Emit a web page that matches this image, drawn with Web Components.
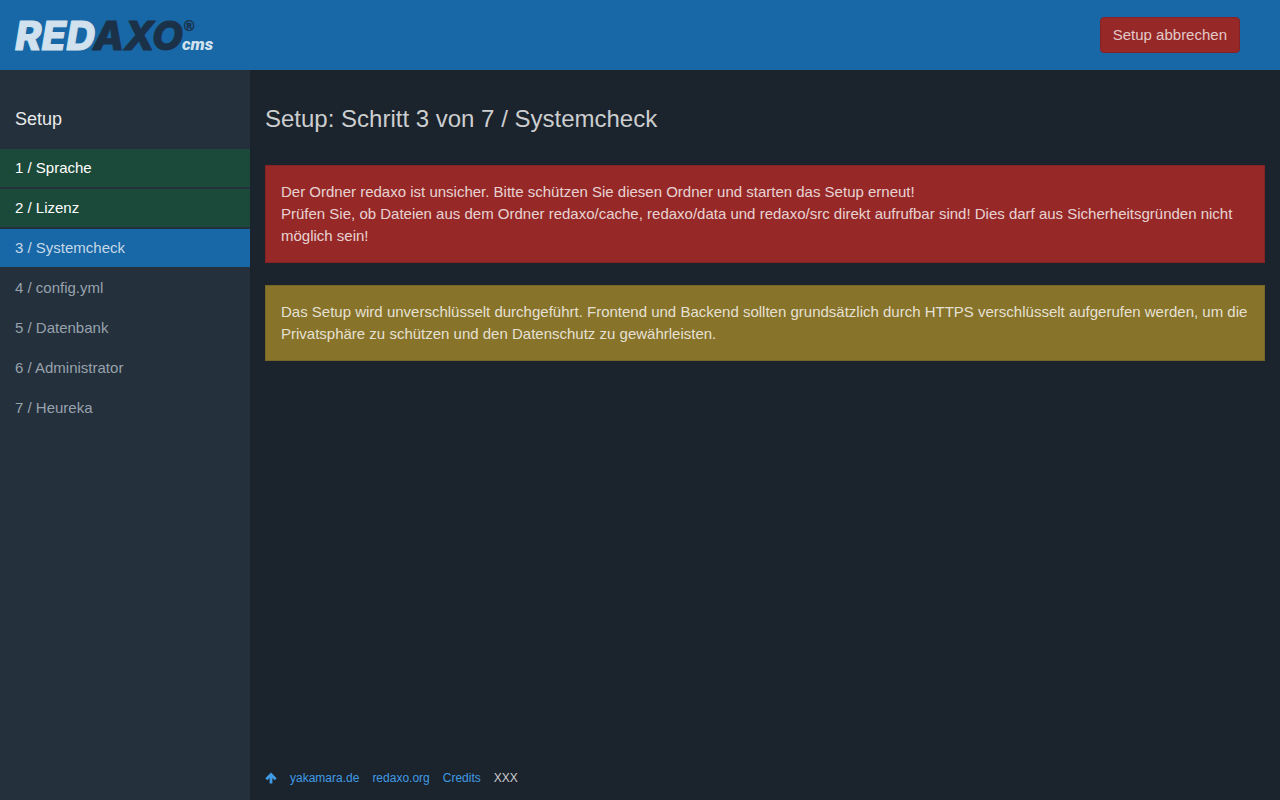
<!DOCTYPE html>
<html lang="de">
<head>
<meta charset="utf-8">
<meta name="viewport" content="width=device-width, initial-scale=1">
<title>Setup: Schritt 3 von 7 / Systemcheck</title>
<style>
  html { background: #1b232c; }
  body { margin: 0; font: 15px/22px "Liberation Sans", Arial, sans-serif; color: rgba(255, 255, 255, .78); }
</style>
</head>
<body>
<setup-page>
  <setup-header slot="header"></setup-header>
  <setup-nav slot="nav" heading="Setup">
    <setup-step state="done">1 / Sprache</setup-step>
    <setup-step state="done">2 / Lizenz</setup-step>
    <setup-step state="active">3 / Systemcheck</setup-step>
    <setup-step>4 / config.yml</setup-step>
    <setup-step>5 / Datenbank</setup-step>
    <setup-step>6 / Administrator</setup-step>
    <setup-step>7 / Heureka</setup-step>
  </setup-nav>
  <page-title>Setup: Schritt 3 von 7 / Systemcheck</page-title>
  <alert-box kind="danger">Der Ordner redaxo ist unsicher. Bitte schützen Sie diesen Ordner und starten das Setup erneut!<br>Prüfen Sie, ob Dateien aus dem Ordner redaxo/cache, redaxo/data und redaxo/src direkt aufrufbar sind! Dies darf aus Sicherheitsgründen nicht möglich sein!</alert-box>
  <alert-box kind="warning">Das Setup wird unverschlüsselt durchgeführt. Frontend und Backend sollten grundsätzlich durch HTTPS verschlüsselt aufgerufen werden, um die Privatsphäre zu schützen und den Datenschutz zu gewährleisten.</alert-box>
  <setup-footer slot="footer"></setup-footer>
</setup-page>

<script>
const define = (name, markup, connected) => {
  const template = document.createElement('template');
  template.innerHTML = markup;
  customElements.define(name, class extends HTMLElement {
    constructor() {
      super();
      this.attachShadow({ mode: 'open' }).append(template.content.cloneNode(true));
    }
    connectedCallback() { if (connected) connected(this); }
  });
};

define('redaxo-logo', `
  <style>
    :host { display: block; width: 200px; height: 32px; }
    a, svg { display: block; }
    svg { overflow: visible; font-family: Inter, sans-serif; font-weight: 800; }
    .light { fill: #d1e1ed; stroke: #d1e1ed; }
    .dark { fill: #1b3148; stroke: #1b3148; }
    .word { font-size: 40px; font-style: italic; stroke-width: 1; stroke-linejoin: round; }
    .cms { font-family: Roboto, sans-serif; font-size: 17px; font-style: italic; font-weight: 900; stroke: none; }
    .mark { font-size: 14px; font-family: "Liberation Sans", sans-serif; font-weight: 700; stroke-width: .4; }
  </style>
  <a href="#" aria-label="REDAXO CMS">
    <svg width="200" height="32" viewBox="0 0 200 32">
      <text class="word light" x="0" y="31">RED<tspan class="dark">AXO</tspan></text>
      <text class="mark dark" x="169" y="12">®</text>
      <text class="cms light" x="167" y="31">cms</text>
    </svg>
  </a>`);

define('setup-header', `
  <style>
    :host { display: block; background: #1867a6; }
    header { display: flex; align-items: center; justify-content: space-between; box-sizing: border-box; min-height: 70px; padding: 0 40px 0 15px; }
    button { font: inherit; color: rgba(255, 255, 255, .75); background: #962928; border: 1px solid #842326; border-radius: 4px; padding: 6px 12px; cursor: pointer; }
  </style>
  <header><redaxo-logo></redaxo-logo><button type="button">Setup abbrechen</button></header>`);

define('setup-step', `
  <style>
    :host { display: block; padding: 8px 15px; color: #98a2ac; }
    :host([state="done"]) { background: #1c4a3a; color: #fff; }
    :host([state="active"]) { background: #1867a6; color: #c5d9e9; }
  </style>
  <slot></slot>`, el => {
    el.setAttribute('role', 'listitem');
    if (el.getAttribute('state') === 'active') el.setAttribute('aria-current', 'step');
  });

define('setup-nav', `
  <style>
    :host { display: block; background: #24303c; }
    h2 { margin: 0; padding: 38px 15px 19px; font-size: 18px; line-height: 22px; font-weight: 400; color: #e9eaeb; }
    .steps { display: flex; flex-direction: column; gap: 2px; }
  </style>
  <nav><h2></h2><div class="steps" role="list"><slot></slot></div></nav>`, el => {
    el.shadowRoot.querySelector('h2').textContent = el.getAttribute('heading');
  });

define('page-title', `
  <style>
    :host { display: block; }
    h1 { margin: 0; padding: 36px 0 11px; font-size: 24px; line-height: 26px; font-weight: 400; }
  </style>
  <h1><slot></slot></h1>`);

define('alert-box', `
  <style>
    :host { display: block; padding: 15px; border: 1px solid; }
    :host([kind="danger"]) { background: #962928; border-color: #842326; }
    :host([kind="warning"]) { background: #87732a; border-color: #786625; }
    div { color: rgba(255, 255, 255, .8); }
  </style>
  <div role="alert"><slot></slot></div>`);

define('setup-footer', `
  <style>
    :host { display: block; font-size: 12px; line-height: 18px; padding: 13px 0; }
    nav { display: flex; flex-wrap: wrap; align-items: center; gap: 13px; }
    a { color: #409be4; text-decoration: none; }
    .top { display: flex; }
  </style>
  <nav>
    <a class="top" href="#" aria-label="Nach oben">
      <svg width="12" height="12" viewBox="0 0 12 12" fill="none" stroke="#409be4" stroke-width="2.8"><path d="M1.3 7.2 6 2.5 10.7 7.2M6 3v8.5"/></svg>
    </a>
    <a href="#yakamara">yakamara.de</a>
    <a href="#redaxo">redaxo.org</a>
    <a href="#credits">Credits</a>
    <span>XXX</span>
  </nav>`);

define('setup-page', `
  <style>
    :host { display: grid; grid-template: auto 1fr / 250px minmax(0, 1fr); min-height: 100vh; background: #1b232c; }
    ::slotted([slot="header"]) { grid-column: 1 / -1; }
    .content { display: flex; flex-direction: column; padding: 0 15px; }
    main { display: flex; flex-direction: column; gap: 22px; flex: 1; }
  </style>
  <slot name="header"></slot>
  <slot name="nav"></slot>
  <div class="content">
    <main><slot></slot></main>
    <slot name="footer"></slot>
  </div>`);
</script>
</body>
</html>
